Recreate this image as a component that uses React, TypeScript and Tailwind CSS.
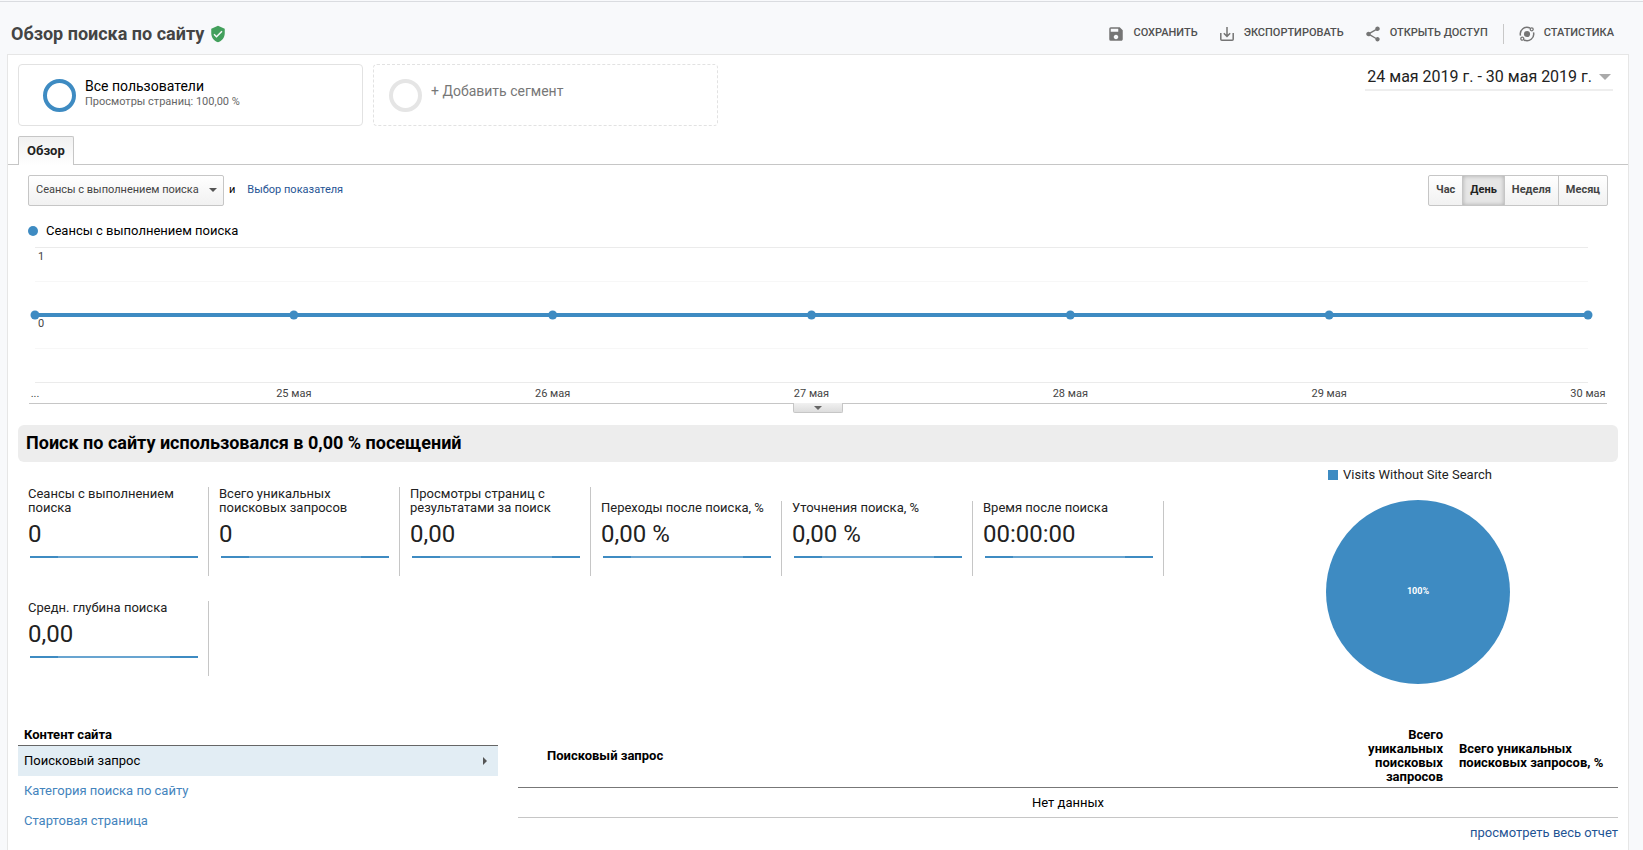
import React from 'react'
import { MdSave, MdShare, MdVerifiedUser } from 'react-icons/md'

interface Metric {
  label: string
  value: string
}

const metrics: Metric[] = [
  { label: 'Сеансы с выполнением поиска', value: '0' },
  { label: 'Всего уникальных поисковых запросов', value: '0' },
  { label: 'Просмотры страниц с результатами за поиск', value: '0,00' },
  { label: 'Переходы после поиска, %', value: '0,00 %' },
  { label: 'Уточнения поиска, %', value: '0,00 %' },
  { label: 'Время после поиска', value: '00:00:00' },
  { label: 'Средн. глубина поиска', value: '0,00' },
]

const days = ['...', '25 мая', '26 мая', '27 мая', '28 мая', '29 мая', '30 мая']

const periods = ['Час', 'День', 'Неделя', 'Месяц']

function ExportIcon() {
  return (
    <svg width="14" height="14" viewBox="0 0 14 14" fill="none" stroke="currentColor" strokeWidth="1.5" aria-hidden="true">
      <path d="M.8 6v6.2q0 1 1 1h10.4q1 0 1-1V6" />
      <path d="M7 0v9M3.8 6.2 7 9.4l3.2-3.2" />
    </svg>
  )
}

function InsightsIcon() {
  return (
    <svg width="16" height="16" viewBox="0 0 16 16" fill="none" stroke="currentColor" strokeWidth="1.5" aria-hidden="true">
      <circle cx="8" cy="8" r="3.1" fill="currentColor" stroke="none" />
      <path d="M1.5 9.6A6.7 6.7 0 0 1 11 2M14.5 6.4A6.7 6.7 0 0 1 5 14" />
      <circle cx="12.7" cy="3.3" r="1.5" strokeWidth="1.3" />
      <circle cx="3.3" cy="12.7" r="1.5" strokeWidth="1.3" />
    </svg>
  )
}

function ToolbarButton({ icon, children }: { icon: React.ReactNode; children: React.ReactNode }) {
  return (
    <button type="button" className="flex items-center gap-[9px] text-[11px] font-medium uppercase text-[#505050]">
      <span className="flex w-4 justify-center text-[#757575]">{icon}</span>
      {children}
    </button>
  )
}

function Header() {
  return (
    <header className="flex h-[52px] items-center justify-between pl-[11px] pr-[29px] pt-[17px] pb-[6px]">
      <h1 className="flex items-center gap-[5px] text-[18px] font-bold text-[#444]">
        Обзор поиска по сайту
        <MdVerifiedUser size={18} className="text-[#43a05c]" />
      </h1>
      <div className="flex items-center gap-[21px]">
        <ToolbarButton icon={<MdSave size={18} className="shrink-0" />}>Сохранить</ToolbarButton>
        <ToolbarButton icon={<ExportIcon />}>Экспортировать</ToolbarButton>
        <ToolbarButton icon={<MdShare size={18} className="shrink-0" />}>Открыть доступ</ToolbarButton>
        <div className="-mx-[6px] h-5 w-px bg-[#c8c8c8]"></div>
        <ToolbarButton icon={<InsightsIcon />}>Статистика</ToolbarButton>
      </div>
    </header>
  )
}

function Segments() {
  return (
    <div className="flex items-start gap-[10px] pl-[10px] pr-[15px] pt-[9px]">
      <div className="flex h-[62px] w-[345px] items-center gap-[9px] rounded border border-[#e2e2e2] pl-6">
        <div className="h-[33px] w-[33px] rounded-full border-4 border-[#3e8bc2]"></div>
        <div className="pb-1">
          <div className="text-[14px] leading-[18px] text-black">Все пользователи</div>
          <div className="text-[11px] leading-[14px] text-[#666]">Просмотры страниц: 100,00 %</div>
        </div>
      </div>
      <button type="button" className="flex h-[62px] w-[345px] items-center gap-[9px] rounded border border-dashed border-[#e2e2e2] pl-[15px]">
        <span className="h-[33px] w-[33px] rounded-full border-4 border-[#e5e5e5]"></span>
        <span className="pb-2 text-[14px] text-[#777]">+ Добавить сегмент</span>
      </button>
      <button type="button" className="ml-auto flex h-[27px] items-center gap-[7px] border-b-2 border-[#eee] px-[2px] text-[16px] text-[#222]">
        24 мая 2019 г. - 30 мая 2019 г.
        <span className="border-x-[6px] border-t-[6px] border-x-transparent border-t-[#aaa]"></span>
      </button>
    </div>
  )
}

function Controls() {
  return (
    <div className="flex items-center pl-5 pr-[20px] pt-[10px] text-[11px]">
      <div className="relative">
        <select
          aria-label="Показатель"
          className="h-[31px] w-[196px] appearance-none rounded-xs border border-[#c6c6c6] bg-linear-to-b from-white to-[#f1f1f1] pl-[7px] text-[#444]"
        >
          <option>Сеансы с выполнением поиска</option>
        </select>
        <span className="pointer-events-none absolute right-[7px] top-[13px] border-x-4 border-t-4 border-x-transparent border-t-[#555]"></span>
      </div>
      <span className="ml-[5px] text-black">и</span>
      <a href="#metric" className="ml-3 text-[#1f5494]">Выбор показателя</a>
      <div className="ml-auto flex h-[31px] rounded-xs border border-[#c6c6c6] bg-linear-to-b from-white to-[#f1f1f1]">
        {periods.map((period) => (
          <button
            key={period}
            type="button"
            className={
              period === 'День'
                ? 'border-r border-[#c6c6c6] bg-[#e6e6e6] px-[7px] font-bold text-[#222] shadow-[inset_0_0_4px_#aaa]'
                : 'border-r border-[#c6c6c6] px-[7px] font-bold text-[#444] last:border-r-0'
            }
          >
            {period}
          </button>
        ))}
      </div>
    </div>
  )
}

function Chart() {
  return (
    <section aria-label="Сеансы с выполнением поиска" className="pl-[21px] pr-[21px] pt-[17px]">
      <div className="-ml-px flex items-center gap-2 text-[13px] leading-[16px] text-black">
        <span className="h-[10px] w-[10px] rounded-full bg-[#3e8bc2]"></span>
        Сеансы с выполнением поиска
      </div>
      <div className="border-b border-[#c6c6c6] pl-[6px] pr-[19px] pt-2">
        <svg className="block w-full overflow-visible text-[11px]" height="156">
          <g shapeRendering="crispEdges">
            <rect y="0" width="100%" height="1" fill="#ebebeb" />
            <rect y="34" width="100%" height="1" fill="#f7f7f7" />
            <rect y="101" width="100%" height="1" fill="#f7f7f7" />
            <rect y="135" width="100%" height="1" fill="#ebebeb" />
            <rect y="66" width="100%" height="4" fill="#3e8bc2" />
          </g>
          <text x="3" y="13" fill="#444">1</text>
          <text x="3" y="80" fill="#444">0</text>
          {days.map((day, i) => (
            <g key={day}>
              <circle cx={`${(i * 100) / 6}%`} cy="68" r="4.5" fill="#3e8bc2" />
              <text x={`${(i * 100) / 6}%`} y="150" textAnchor="middle" fill="#444">{day}</text>
            </g>
          ))}
        </svg>
      </div>
      <div className="flex justify-center">
        <button
          type="button"
          aria-label="Свернуть график"
          className="-mt-px flex h-[10px] w-[50px] items-center justify-center rounded-b-xs border border-t-0 border-[#c6c6c6] bg-linear-to-b from-[#f1f1f1] to-[#ddd]"
        >
          <span className="border-x-4 border-t-4 border-x-transparent border-t-[#666]"></span>
        </button>
      </div>
    </section>
  )
}

function MetricCard({ label, value }: Metric) {
  return (
    <div className="w-[191px] border-r border-[#c6c6c6] pb-[18px] pl-[10px] text-[#222]">
      <div className="w-[170px] text-[13px] leading-[14px]">{label}</div>
      <div className="pt-1 text-[24px] leading-[30px]">{value}</div>
      {/* Flat sparkline */}
      <div className="ml-[2px] mr-[10px] mt-[7px] flex h-[2px] justify-between bg-[#68a4d0]">
        <span className="w-7 bg-[#3e8bc2]"></span>
        <span className="w-7 bg-[#3e8bc2]"></span>
      </div>
    </div>
  )
}

function Summary() {
  return (
    <section className="pl-[10px] pr-[10px] pt-[12px]">
      <h2 className="rounded-md bg-[#ededed] px-2 pb-[7px] pt-[5px] text-[18px] font-bold leading-[25px] text-black">
        Поиск по сайту использовался в 0,00 % посещений
      </h2>
      <div className="flex">
        <div className="flex flex-1 flex-wrap content-start items-end gap-y-[25px] pt-[25px]">
          {metrics.map((metric) => (
            <MetricCard key={metric.label} {...metric} />
          ))}
        </div>
        <div className="flex w-[400px] flex-col items-center pt-[5px]">
          <div className="mr-4 flex items-center gap-[5px] text-[13px] leading-[16px] text-[#222]">
            <span className="h-[10px] w-[10px] bg-[#3e8bc2]"></span>
            Visits Without Site Search
          </div>
          <div className="mt-[17px] flex h-[184px] w-[184px] items-center justify-center rounded-full bg-[#3e8bc2] text-[9px] font-bold text-white">
            100%
          </div>
        </div>
      </div>
    </section>
  )
}

function Reports() {
  return (
    <div className="flex gap-5 pl-[10px] pr-[10px] pt-[40px] text-[13px] leading-[14px]">
      <nav aria-label="Контент сайта" className="w-[480px] shrink-0">
        <h3 className="border-b border-[#666] px-[6px] pb-[3px] pt-1 font-bold text-black">Контент сайта</h3>
        <a href="#query" className="flex h-[30px] items-center justify-between bg-[#e2edf4] pl-[6px] pr-[11px] text-black">
          Поисковый запрос
          <span className="border-y-4 border-l-4 border-y-transparent border-l-[#555]"></span>
        </a>
        <a href="#category" className="flex h-[30px] items-center px-[6px] text-[#4484bd]">Категория поиска по сайту</a>
        <a href="#start" className="flex h-[30px] items-center px-[6px] text-[#4484bd]">Стартовая страница</a>
      </nav>
      <div className="flex-1">
        <table className="w-full table-fixed border-collapse text-black">
          <thead>
            <tr className="border-b border-[#777] font-bold">
              <th className="pb-[3px] pt-1 pl-[29px] text-left">Поисковый запрос</th>
              <th className="w-[110px] pb-[3px] pt-1 pr-2 text-right">Всего уникальных поисковых запросов</th>
              <th className="w-[167px] pb-[3px] pt-1 pl-2 text-left">Всего уникальных поисковых запросов, %</th>
            </tr>
          </thead>
          <tbody>
            <tr className="border-b border-[#c6c6c6]">
              <td colSpan={3} className="h-[30px] text-center">Нет данных</td>
            </tr>
          </tbody>
        </table>
        <div className="pt-2 text-right">
          <a href="#report" className="text-[#1f5494]">просмотреть весь отчет</a>
        </div>
      </div>
    </div>
  )
}

export default function App() {
  return (
    <div className="flex min-h-screen flex-col bg-[#f8f9fb] pt-px font-[Roboto,sans-serif]">
      <div className="h-px bg-[#dadce0]"></div>
      <Header />
      <main className="ml-[7px] mr-[14px] flex-1 border border-b-0 border-[#e6e6e6] bg-white pb-2">
        <Segments />
        <div className="mt-[10px] flex border-b border-[#c6c6c6] pl-[10px]">
          <button
            type="button"
            className="-mb-px h-[29px] rounded-t-xs border border-b-0 border-[#c6c6c6] bg-linear-to-b from-[#f1f1f1] to-white px-2 text-[13px] font-bold text-[#222]"
          >
            Обзор
          </button>
        </div>
        <Controls />
        <Chart />
        <Summary />
        <Reports />
      </main>
    </div>
  )
}
